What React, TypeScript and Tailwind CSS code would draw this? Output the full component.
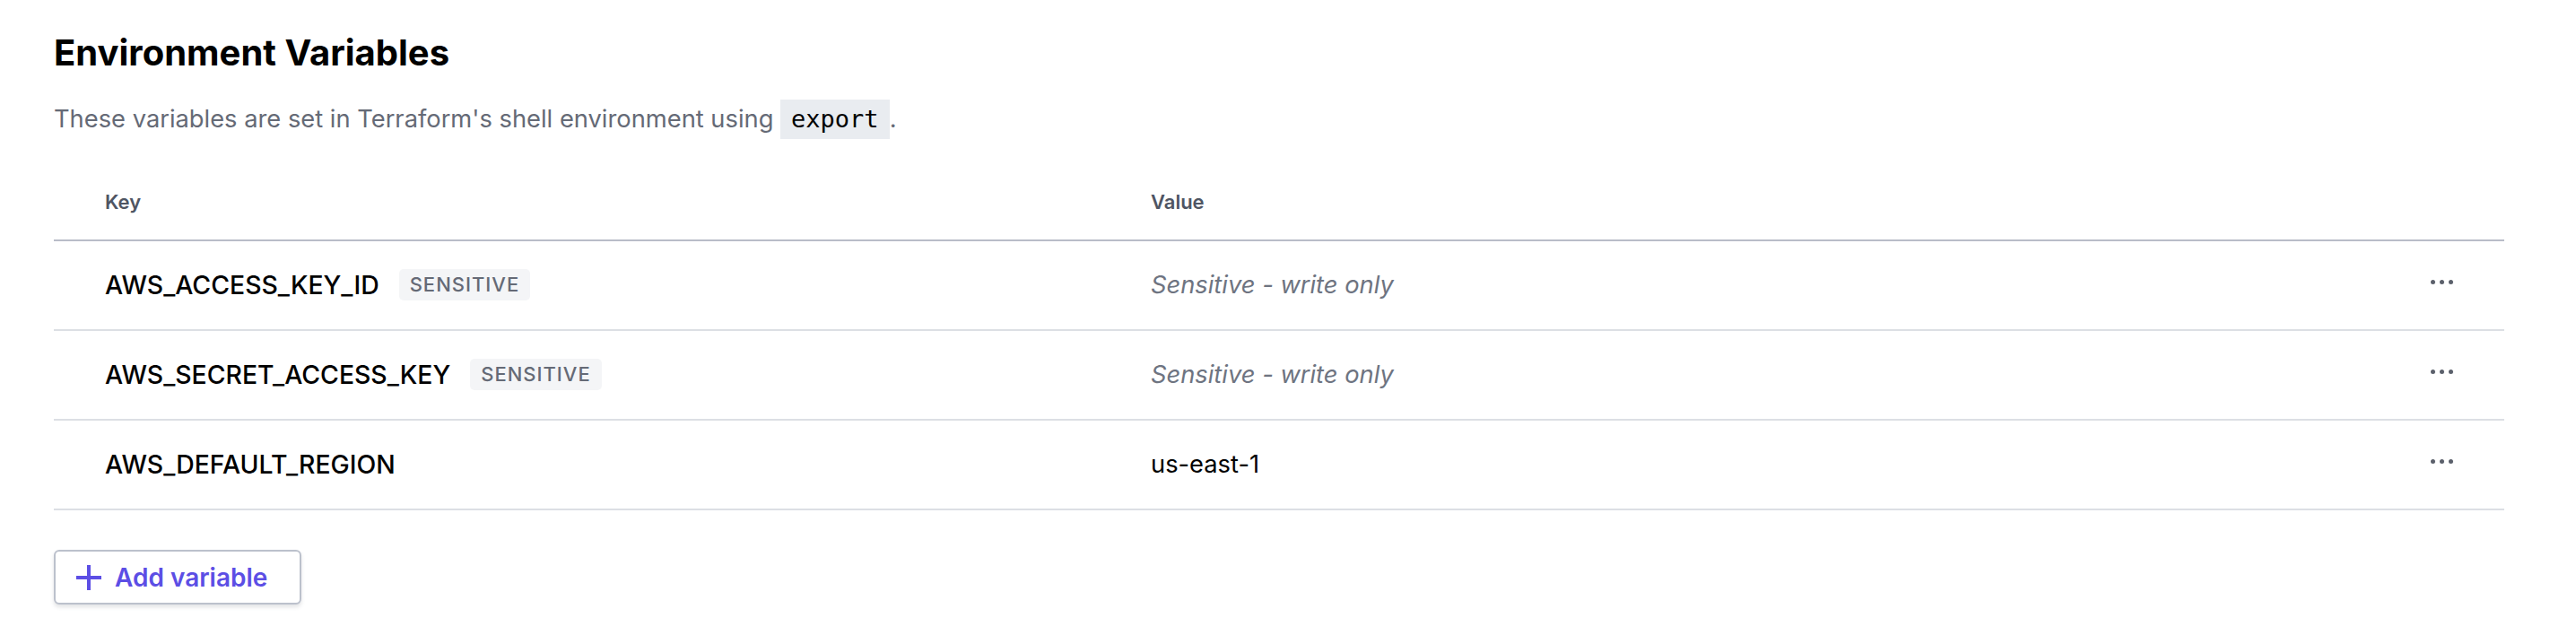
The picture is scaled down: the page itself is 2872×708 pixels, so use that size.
interface Variable {
  key: string;
  value: string;
  sensitive: boolean;
}

const variables: Variable[] = [
  { key: 'AWS_ACCESS_KEY_ID', value: '', sensitive: true },
  { key: 'AWS_SECRET_ACCESS_KEY', value: '', sensitive: true },
  { key: 'AWS_DEFAULT_REGION', value: 'us-east-1', sensitive: false },
];

function Dots() {
  return (
    <div className="flex items-center gap-[5px] pb-[8px]">
      <span className="w-[5px] h-[5px] rounded-full bg-[#5b606b]" />
      <span className="w-[5px] h-[5px] rounded-full bg-[#5b606b]" />
      <span className="w-[5px] h-[5px] rounded-full bg-[#5b606b]" />
    </div>
  );
}

function PlusIcon() {
  return (
    <svg width="28" height="28" viewBox="0 0 28 28" fill="none">
      <path d="M14 0v28M0 14h28" stroke="currentColor" strokeWidth="4" />
    </svg>
  );
}

function VariableRow({ variable }: { variable: Variable }) {
  return (
    <div className="flex items-center h-[100px] border-b-2 border-[#dcdfe4]">
      <div className="w-[1223px] pl-[57px] flex items-center gap-[22px]">
        <span className="text-[28.4px] font-medium text-black">{variable.key}</span>
        {variable.sensitive && (
          <span className="h-[35px] px-[12px] flex items-center rounded-[5px] bg-[#f4f5f7] text-[22px] font-medium tracking-[1px] text-[#656a76]">
            SENSITIVE
          </span>
        )}
      </div>
      <div className="flex-1">
        {variable.sensitive ? (
          <span className="text-[27.3px] italic text-[#6e7481]">Sensitive - write only</span>
        ) : (
          <span className="text-[27.3px] text-black">{variable.value}</span>
        )}
      </div>
      <div className="w-[140px] flex justify-center">
        <Dots />
      </div>
    </div>
  );
}

export default function App() {
  return (
    <div
      className="w-full h-[708px] bg-white pl-[60px] pr-[80px] pt-[35px]"
      style={{ fontFamily: 'Inter, "Noto Sans", sans-serif' }}
    >
      <h1 className="text-[40px] leading-[48px] font-bold text-black">Environment Variables</h1>

      <p className="mt-[28px] text-[27.3px] leading-[44px] text-[#656a76]">
        These variables are set in Terraform's shell environment using{' '}
        <code
          className="inline-block px-[12px] bg-[#e9ecf0] text-black text-[27px] leading-[44px]"
          style={{ fontFamily: '"DejaVu Sans Mono", monospace' }}
        >
          export
        </code>
        .
      </p>

      <div className="mt-[54px]">
        <div className="flex items-center pb-[26px] border-b-2 border-[#b9bdc8]">
          <div className="w-[1223px] pl-[57px] text-[22px] leading-[32px] font-semibold text-[#4f5563]">Key</div>
          <div className="flex-1 text-[22px] leading-[32px] font-semibold text-[#4f5563]">Value</div>
        </div>
        {variables.map((v) => (
          <VariableRow key={v.key} variable={v} />
        ))}
      </div>

      <button className="mt-[44px] h-[61px] flex items-center gap-[15px] pl-[23px] pr-[36px] border-2 border-[#bcc1cc] rounded-[6px] bg-white shadow-[0_3px_4px_rgba(101,106,118,0.18)] text-[#5c4ee5]">
        <PlusIcon />
        <span className="text-[28px] font-semibold">Add variable</span>
      </button>
    </div>
  );
}
